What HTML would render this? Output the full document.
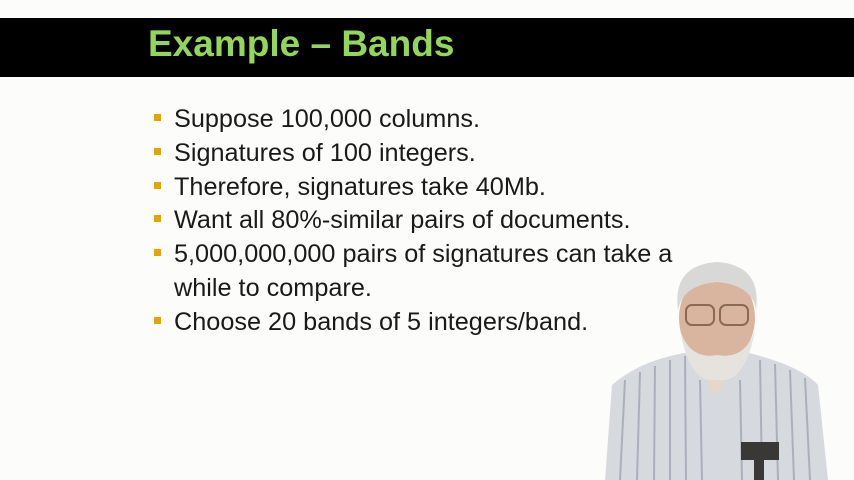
<!DOCTYPE html>
<html><head><style>
body{margin:0;width:854px;height:480px;overflow:hidden;background:#fcfcfa;position:relative;font-family:"Liberation Sans",sans-serif}
.bar{position:absolute;left:0;top:18px;width:854px;height:59px;background:#000}
.title{position:absolute;left:148px;top:23px;font-size:37px;color:#92d65a;font-weight:bold;letter-spacing:0}
.l{position:absolute;left:174px;font-size:25px;color:#1a1a1a;white-space:nowrap;transform:scaleX(1.01);transform-origin:left}
.b{position:absolute;left:154px;width:7px;height:7px;background:#e2a40a}
</style></head><body>
<div class="bar"></div>
<div class="title">Example – Bands</div>
<div class="b" style="top:114px"></div><div class="l" style="top:105px">Suppose 100,000 columns.</div>
<div class="b" style="top:148px"></div><div class="l" style="top:139px">Signatures of 100 integers.</div>
<div class="b" style="top:182px"></div><div class="l" style="top:173px">Therefore, signatures take 40Mb.</div>
<div class="b" style="top:215px"></div><div class="l" style="top:206px">Want all 80%-similar pairs of documents.</div>
<div class="b" style="top:249px"></div><div class="l" style="top:240px">5,000,000,000 pairs of signatures can take a</div>
<div class="l" style="top:274px">while to compare.</div>
<div class="b" style="top:317px"></div><div class="l" style="top:308px">Choose 20 bands of 5 integers/band.</div>
<svg style="position:absolute;left:0;top:0" width="854" height="480">
<path d="M605 480 L612 385 Q640 360 690 352 L745 352 Q800 365 818 385 L828 480 Z" fill="#d6d9de"/>
<g stroke="#aab0bb" stroke-width="2">
<line x1="625" y1="380" x2="620" y2="480"/><line x1="640" y1="372" x2="637" y2="480"/><line x1="655" y1="366" x2="654" y2="480"/><line x1="670" y1="360" x2="670" y2="480"/><line x1="685" y1="356" x2="686" y2="480"/><line x1="700" y1="380" x2="702" y2="480"/><line x1="740" y1="380" x2="742" y2="480"/><line x1="760" y1="360" x2="762" y2="480"/><line x1="775" y1="364" x2="778" y2="480"/><line x1="790" y1="370" x2="794" y2="480"/><line x1="805" y1="378" x2="810" y2="480"/>
</g>
<path d="M688 350 L715 395 L745 350 Z" fill="#e8d6c8"/>
<ellipse cx="717" cy="318" rx="38" ry="46" fill="#d9b5a0"/>
<path d="M680 330 Q690 385 717 380 Q745 385 755 330 Q745 360 717 355 Q690 360 680 330Z" fill="#e6e2de"/>
<path d="M678 310 Q672 265 717 262 Q762 265 756 310 Q752 285 717 282 Q683 285 678 310Z" fill="#d8d8d6"/>
<rect x="686" y="305" width="28" height="20" rx="6" fill="none" stroke="#8a6a50" stroke-width="2"/>
<rect x="720" y="305" width="28" height="20" rx="6" fill="none" stroke="#8a6a50" stroke-width="2"/>
<rect x="741" y="442" width="38" height="18" fill="#3a3836"/><rect x="754" y="458" width="10" height="22" fill="#3a3836"/>
</svg>
</body></html>
